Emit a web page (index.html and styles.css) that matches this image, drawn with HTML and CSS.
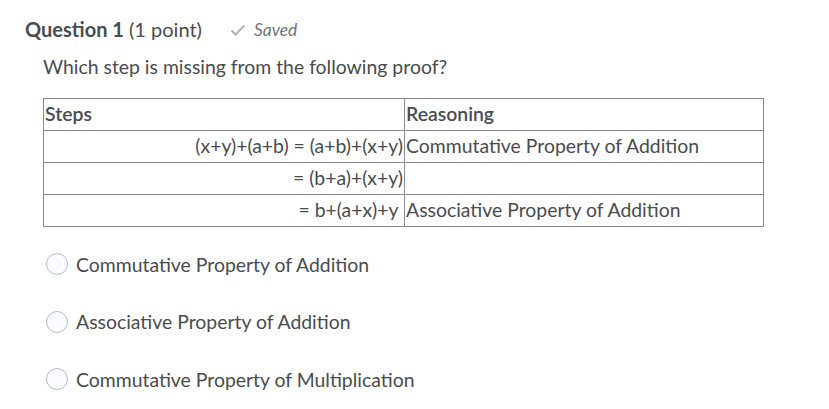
FILE: index.html
```html
<!DOCTYPE html>
<html>
<head>
<meta charset="utf-8">
<link rel="stylesheet" href="styles.css">
</head>
<body>
<div class="question">
  <div class="q-header">
    <h2 class="q-title"><span class="q-num">Question 1</span> (1 point)</h2>
    <span class="saved">
      <svg class="check" width="16" height="12" viewBox="0 0 16 12"><path d="M1.5 6.5 L5.5 10.5 L14.5 1.5" fill="none" stroke="#b0b3b5" stroke-width="2"/></svg>
      <span class="saved-text">Saved</span>
    </span>
  </div>
  <p class="prompt">Which step is missing from the following proof?</p>
  <table class="proof">
    <tr><th class="steps">Steps</th><th class="reason">Reasoning</th></tr>
    <tr><td class="steps">(x+y)+(a+b) = (a+b)+(x+y)</td><td class="reason">Commutative Property of Addition</td></tr>
    <tr><td class="steps">= (b+a)+(x+y)</td><td class="reason"></td></tr>
    <tr><td class="steps">= b+(a+x)+y&nbsp;</td><td class="reason">Associative Property of Addition</td></tr>
  </table>
  <div class="options">
    <label class="option"><span class="radio"></span><span>Commutative Property of Addition</span></label>
    <label class="option"><span class="radio"></span><span>Associative Property of Addition</span></label>
    <label class="option"><span class="radio"></span><span>Commutative Property of Multiplication</span></label>
  </div>
</div>
</body>
</html>
```
FILE: styles.css
```css
* { box-sizing: border-box; }
html, body { margin: 0; padding: 0; background: #ffffff; }
body {
  font-family: Lato, "Open Sans", sans-serif;
  color: #494c4e;
  font-size: 19.4px;
}
.question { padding: 17px 0 0 25px; }
.q-header { display: flex; align-items: center; height: 24px; }
.q-title { margin: 0; font-size: 20px; font-weight: 400; color: #494c4e; }
.q-num { font-weight: 700; }
.saved { display: flex; align-items: center; margin-left: 28px; }
.check { margin-right: 8px; margin-top: 1px; }
.saved-text { font-style: italic; font-size: 17.4px; color: #6e7376; }
.prompt { margin: 14px 0 0 18px; line-height: 24px; }
.proof {
  margin: 19px 0 0 18px;
  border-collapse: collapse;
  width: 721px;
}
.proof th, .proof td {
  border: 1px solid #8a8a8a;
  height: 32px;
  padding: 0 1px 2px;
  font-size: 19.4px;
  color: #494c4e;
  vertical-align: middle;
}
.proof th { font-weight: 600; text-align: left; }
.proof .steps { width: 361px; }
.proof td.steps { text-align: right; }
.proof .reason { text-align: left; }
.options { display: flex; flex-direction: column; margin: 26px 0 0 21px; gap: 35.5px; }
.option { display: flex; align-items: center; height: 22px; }
.radio {
  width: 22px; height: 22px; border-radius: 50%;
  border: 1px solid #b8bcbf; background: #f9fbff;
  margin-right: 8px; flex: none;
}
```
